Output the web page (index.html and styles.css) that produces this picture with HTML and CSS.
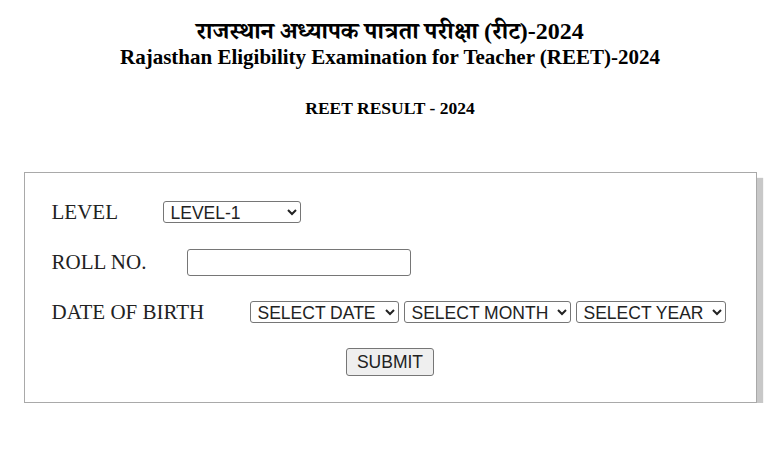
FILE: index.html
```html
<!DOCTYPE html>
<html>
<head>
<meta charset="utf-8">
<link rel="stylesheet" href="styles.css">
</head>
<body>
<div class="header">
  <h1 class="title-hi">राजस्थान अध्यापक पात्रता परीक्षा (रीट)-2024</h1>
  <h2 class="title-en">Rajasthan Eligibility Examination for Teacher (REET)-2024</h2>
  <h3 class="subtitle">REET RESULT - 2024</h3>
</div>
<form class="box">
  <div class="row">
    <span class="label label-level">LEVEL</span>
    <select class="sel sel-level"><option>LEVEL-1</option><option>LEVEL-2</option></select>
  </div>
  <div class="row">
    <span class="label label-roll">ROLL NO.</span>
    <input class="roll" type="text">
  </div>
  <div class="row">
    <span class="label label-dob">DATE OF BIRTH</span>
    <div class="dob">
      <select class="sel sel-date"><option>SELECT DATE</option></select>
      <select class="sel sel-month"><option>SELECT MONTH</option></select>
      <select class="sel sel-year"><option>SELECT YEAR</option></select>
    </div>
  </div>
  <div class="row row-submit">
    <button class="submit" type="button">SUBMIT</button>
  </div>
</form>
</body>
</html>
```
FILE: styles.css
```css
body {
  margin: 0;
  background: #fff;
  font-family: "Liberation Serif", "Noto Serif Devanagari", "Noto Sans Devanagari", serif;
  color: #000;
}
.header {
  text-align: center;
  padding-top: 18px;
}
.title-hi {
  margin: 0;
  font-size: 24px;
  line-height: 27px;
  font-weight: bold;
}
.title-en {
  margin: 0;
  font-size: 21px;
  line-height: 24px;
  font-weight: bold;
}
.subtitle {
  margin: 29px 0 0;
  font-size: 17.5px;
  line-height: 20px;
  font-weight: bold;
}
.box {
  width: 733px;
  box-sizing: border-box;
  margin: 54px auto 0;
  border: 1px solid #a9a9a9;
  box-shadow: 6px 6px 1px #c8c8c8;
  padding: 14px 0 15px 27px;
}
.row {
  height: 50px;
  display: flex;
  align-items: center;
}
.label {
  font-size: 21px;
  color: #222;
  flex: none;
}
.label-level { width: 111px; }
.label-roll { width: 135px; }
.label-dob { width: 198px; }
.sel {
  font-family: "Liberation Sans", Arial, sans-serif;
  font-size: 17.5px;
  height: 22px;
  color: #222;
  background: #fff;
  border: 1px solid #767676;
  border-radius: 3px;
  padding: 0 0 0 3px;
}
.sel-level { width: 138px; }
.sel-date { width: 149px; }
.sel-month { width: 167px; }
.sel-year { width: 150px; }
.dob {
  display: flex;
  gap: 5px;
}
.roll {
  width: 224px;
  height: 27px;
  box-sizing: border-box;
  border: 1px solid #767676;
  border-radius: 3px;
  padding: 0 4px;
  font-size: 16px;
}
.row-submit {
  justify-content: center;
  padding-right: 27px;
}
.submit {
  font-family: "Liberation Sans", Arial, sans-serif;
  font-size: 17.5px;
  width: 88px;
  height: 28px;
  color: #222;
  background: #efefef;
  border: 1px solid #767676;
  border-radius: 3px;
}
```
